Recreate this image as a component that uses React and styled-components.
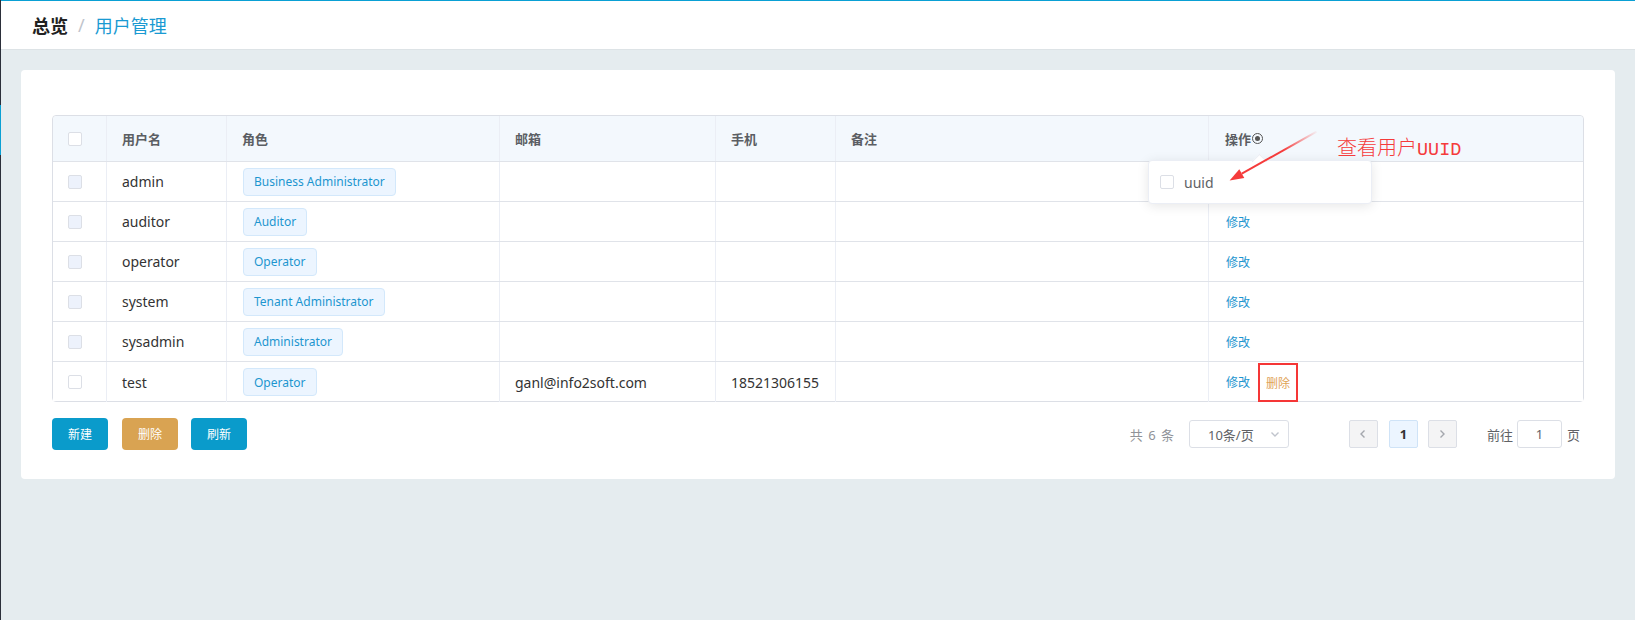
import React from "react";
import styled, { createGlobalStyle } from "styled-components";

const Global = createGlobalStyle`
  html, body { margin: 0; padding: 0; }
  body {
    background: #e5ecef;
    font-family: "Noto Sans", "Noto Sans CJK SC", sans-serif;
    color: #333;
  }
  * { box-sizing: border-box; }
`;

const Shell = styled.div`
  display: flex;
  height: 620px;
  overflow: hidden;
`;

const SideEdge = styled.div`
  width: 1px;
  flex: none;
  background: linear-gradient(
    to bottom,
    #2b2f3a 0,
    #2b2f3a 105px,
    #0aa0d4 105px,
    #0aa0d4 155px,
    #2b2f3a 155px
  );
`;

const Main = styled.div`
  flex: 1;
  display: flex;
  flex-direction: column;
`;

const TopBar = styled.header`
  height: 50px;
  background: #fff;
  border-top: 1px solid #0aa0d4;
  border-bottom: 1px solid #dde3e6;
  display: flex;
  align-items: center;
  padding-left: 31px;
  font-size: 18px;
`;

const Crumb = styled.span`
  color: ${(p) => (p.$active ? "#1a9ad2" : "#222")};
  font-weight: ${(p) => (p.$active ? 400 : 700)};
`;

const Sep = styled.span`
  color: #c0c4cc;
  margin: 0 10px;
`;

const Content = styled.main`
  padding: 20px 20px 20px 20px;
`;

const Card = styled.section`
  background: #fff;
  border-radius: 4px;
  padding: 45px 31px 29px 31px;
`;

const TableWrap = styled.div`
  position: relative;
  border: 1px solid #dcdfe6;
  border-radius: 4px;
`;

const Row = styled.div`
  display: grid;
  grid-template-columns: 54px 120px 273px 216px 120px 373px 1fr;
  height: ${(p) => (p.$head ? "45px" : "40px")};
  background: ${(p) => (p.$head ? "#f3f8fd" : "#fff")};
  border-top: ${(p) => (p.$head ? "none" : "1px solid #e0e3e9")};
  border-radius: ${(p) => (p.$head ? "4px 4px 0 0" : "0")};
`;

const Cell = styled.div`
  position: relative;
  display: flex;
  align-items: center;
  padding-left: ${(p) => (p.$pl ? p.$pl : "15px")};
  border-right: ${(p) => (p.$last ? "none" : "1px solid #ebeef5")};
  font-size: ${(p) => (p.$head ? "13px" : "14px")};
  font-weight: ${(p) => (p.$head ? 700 : 400)};
  color: ${(p) => (p.$head ? "#5b5e63" : "#333")};
`;

const Check = styled.span`
  display: inline-block;
  width: 14px;
  height: 14px;
  border: 1px solid #dcdfe6;
  border-radius: 2px;
  background: ${(p) => (p.$disabled ? "#edf2fc" : "#fff")};
`;

const Tag = styled.span`
  display: inline-flex;
  align-items: center;
  height: 28px;
  padding: 0 10px;
  font-size: 12px;
  color: #1d95cf;
  background: #ecf5ff;
  border: 1px solid #d3e8fb;
  border-radius: 4px;
`;

const Link = styled.span`
  font-size: 12px;
  color: ${(p) => (p.$danger ? "#dfa356" : "#1d95cf")};
  cursor: pointer;
`;

const Boxed = styled.span`
  display: inline-flex;
  align-items: center;
  height: 39px;
  margin-top: 1px;
  margin-left: 8px;
  padding: 0 6px;
  border: 2px solid #f53636;
`;

const RadioIcon = styled.span`
  display: inline-block;
  width: 11px;
  height: 11px;
  margin-left: 1px;
  border: 1px solid #555;
  border-radius: 50%;
  position: relative;
  &::after {
    content: "";
    position: absolute;
    left: 2px;
    top: 2px;
    width: 5px;
    height: 5px;
    border-radius: 50%;
    background: #555;
  }
`;

const Popover = styled.div`
  position: absolute;
  left: -61px;
  top: 44px;
  width: 224px;
  height: 44px;
  background: #fff;
  border: 1px solid #ebeef5;
  border-radius: 4px;
  box-shadow: 0 2px 12px rgba(0, 0, 0, 0.1);
  display: flex;
  align-items: center;
  padding-left: 11px;
  gap: 10px;
  font-size: 14px;
  font-weight: 400;
  color: #606266;
  z-index: 2;
  &::before {
    content: "";
    position: absolute;
    top: -5px;
    left: 105px;
    width: 10px;
    height: 10px;
    background: #fff;
    border-left: 1px solid #ebeef5;
    border-top: 1px solid #ebeef5;
    transform: rotate(45deg);
  }
`;

const Note = styled.div`
  position: absolute;
  left: 1284px;
  top: 19px;
  line-height: 24px;
  font-size: 20px;
  color: #f53b3b;
  white-space: nowrap;
  z-index: 3;
  font-family: "Noto Sans CJK SC", sans-serif;
  font-weight: 300;
`;

const Mono = styled.span`
  font-family: "Liberation Mono", monospace;
  font-size: 18.5px;
`;

const ArrowSvg = styled.svg`
  position: absolute;
  left: 1160px;
  top: 0;
  z-index: 3;
  overflow: visible;
`;

const Footer = styled.div`
  display: flex;
  align-items: center;
  margin-top: 16px;
`;

const Btn = styled.button`
  width: 56px;
  height: 32px;
  border: none;
  border-radius: 4px;
  margin-right: ${(p) => (p.$gap ? p.$gap : "0")};
  background: ${(p) => (p.$warn ? "#d9a352" : "#0a9bcb")};
  color: #fff;
  font-size: 12px;
  font-family: inherit;
  padding: 0;
`;

const Pager = styled.div`
  margin-left: auto;
  display: flex;
  align-items: center;
  font-size: 13px;
  color: #606266;
  margin-right: 4px;
`;

const Total = styled.span`
  color: #909399;
  margin-right: 15px;
  word-spacing: 2px;
`;

const SelectBox = styled.div`
  width: 100px;
  height: 28px;
  border: 1px solid #dcdfe6;
  border-radius: 3px;
  display: flex;
  align-items: center;
  justify-content: space-between;
  padding: 0 8px 0 18px;
  color: #606266;
  font-size: 13px;
  margin-right: 60px;
`;

const PageBtn = styled.div`
  width: 29px;
  height: 28px;
  display: flex;
  align-items: center;
  justify-content: center;
  border-radius: 2px;
  margin-right: ${(p) => (p.$gap ? p.$gap : "11px")};
  background: ${(p) => (p.$active ? "#ecf5ff" : "#f4f4f5")};
  border: 1px solid ${(p) => (p.$active ? "#cfe3f7" : "#dcdfe6")};
  color: ${(p) => (p.$active ? "#333" : "#a4a7ad")};
  font-weight: 700;
  font-size: 13px;
`;

const Jump = styled.input`
  width: 45px;
  height: 28px;
  border: 1px solid #dcdfe6;
  border-radius: 3px;
  text-align: center;
  font-size: 13px;
  color: #606266;
  margin: 0 5px 0 4px;
  font-family: inherit;
  outline: none;
`;

const ChevronWrap = styled.span`
  display: flex;
  color: ${(p) => p.$color || "inherit"};
`;

const Chevron = ({ dir = "right", size = 10 }) => (
  <svg width={size} height={size} viewBox="0 0 10 10" fill="none" stroke="currentColor" strokeWidth="1.4">
    {dir === "left" ? <path d="M6.5 1.5 3 5l3.5 3.5" /> : dir === "down" ? <path d="M1.5 3.5 5 7l3.5-3.5" /> : <path d="M3.5 1.5 7 5 3.5 8.5" />}
  </svg>
);

const users = [
  { name: "admin", role: "Business Administrator", email: "", phone: "", ops: [], disabled: true },
  { name: "auditor", role: "Auditor", email: "", phone: "", ops: ["edit"], disabled: true },
  { name: "operator", role: "Operator", email: "", phone: "", ops: ["edit"], disabled: true },
  { name: "system", role: "Tenant Administrator", email: "", phone: "", ops: ["edit"], disabled: true },
  { name: "sysadmin", role: "Administrator", email: "", phone: "", ops: ["edit"], disabled: true },
  { name: "test", role: "Operator", email: "ganl@info2soft.com", phone: "18521306155", ops: ["edit", "delete"], disabled: false },
];

export default function App() {
  return (
    <>
      <Global />
      <Shell>
        <SideEdge />
        <Main>
          <TopBar>
            <Crumb>总览</Crumb>
            <Sep>/</Sep>
            <Crumb $active>用户管理</Crumb>
          </TopBar>
          <Content>
            <Card>
              <TableWrap>
                <Row $head>
                  <Cell $head><Check /></Cell>
                  <Cell $head>用户名</Cell>
                  <Cell $head>角色</Cell>
                  <Cell $head>邮箱</Cell>
                  <Cell $head>手机</Cell>
                  <Cell $head>备注</Cell>
                  <Cell $head $last $pl="16px">
                    操作<RadioIcon />
                    <Popover>
                      <Check />
                      <span>uuid</span>
                    </Popover>
                  </Cell>
                </Row>
                {users.map((u) => (
                  <Row key={u.name}>
                    <Cell><Check $disabled={u.disabled} /></Cell>
                    <Cell>{u.name}</Cell>
                    <Cell $pl="16px"><Tag>{u.role}</Tag></Cell>
                    <Cell>{u.email}</Cell>
                    <Cell>{u.phone}</Cell>
                    <Cell />
                    <Cell $last $pl="17px">
                      {u.ops.includes("edit") && <Link>修改</Link>}
                      {u.ops.includes("delete") && (
                        <Boxed>
                          <Link $danger>删除</Link>
                        </Boxed>
                      )}
                    </Cell>
                  </Row>
                ))}
                <ArrowSvg width="120" height="80" viewBox="0 0 120 80">
                  <defs>
                    <linearGradient id="ag" gradientUnits="userSpaceOnUse" x1="103.6" y1="15.7" x2="28.8" y2="57.6">
                      <stop offset="0" stopColor="#f53b3b" stopOpacity="0.05" />
                      <stop offset="0.45" stopColor="#f53b3b" stopOpacity="1" />
                    </linearGradient>
                  </defs>
                  <line x1="103.6" y1="15.7" x2="28.8" y2="57.6" stroke="url(#ag)" strokeWidth="2" />
                  <path d="M16.6 64.5 L31.3 62.0 L26.3 53.3 Z" fill="#f53b3b" />
                </ArrowSvg>
                <Note>
                  查看用户<Mono>UUID</Mono>
                </Note>
              </TableWrap>
              <Footer>
                <Btn $gap="14px">新建</Btn>
                <Btn $warn $gap="13px">删除</Btn>
                <Btn>刷新</Btn>
                <Pager>
                  <Total>共 6 条</Total>
                  <SelectBox>
                    <span>10条/页</span>
                    <ChevronWrap $color="#c0c4cc"><Chevron dir="down" /></ChevronWrap>
                  </SelectBox>
                  <PageBtn><Chevron dir="left" /></PageBtn>
                  <PageBtn $active $gap="10px">1</PageBtn>
                  <PageBtn $gap="30px"><Chevron dir="right" /></PageBtn>
                  <span>前往</span>
                  <Jump defaultValue="1" />
                  <span>页</span>
                </Pager>
              </Footer>
            </Card>
          </Content>
        </Main>
      </Shell>
    </>
  );
}
